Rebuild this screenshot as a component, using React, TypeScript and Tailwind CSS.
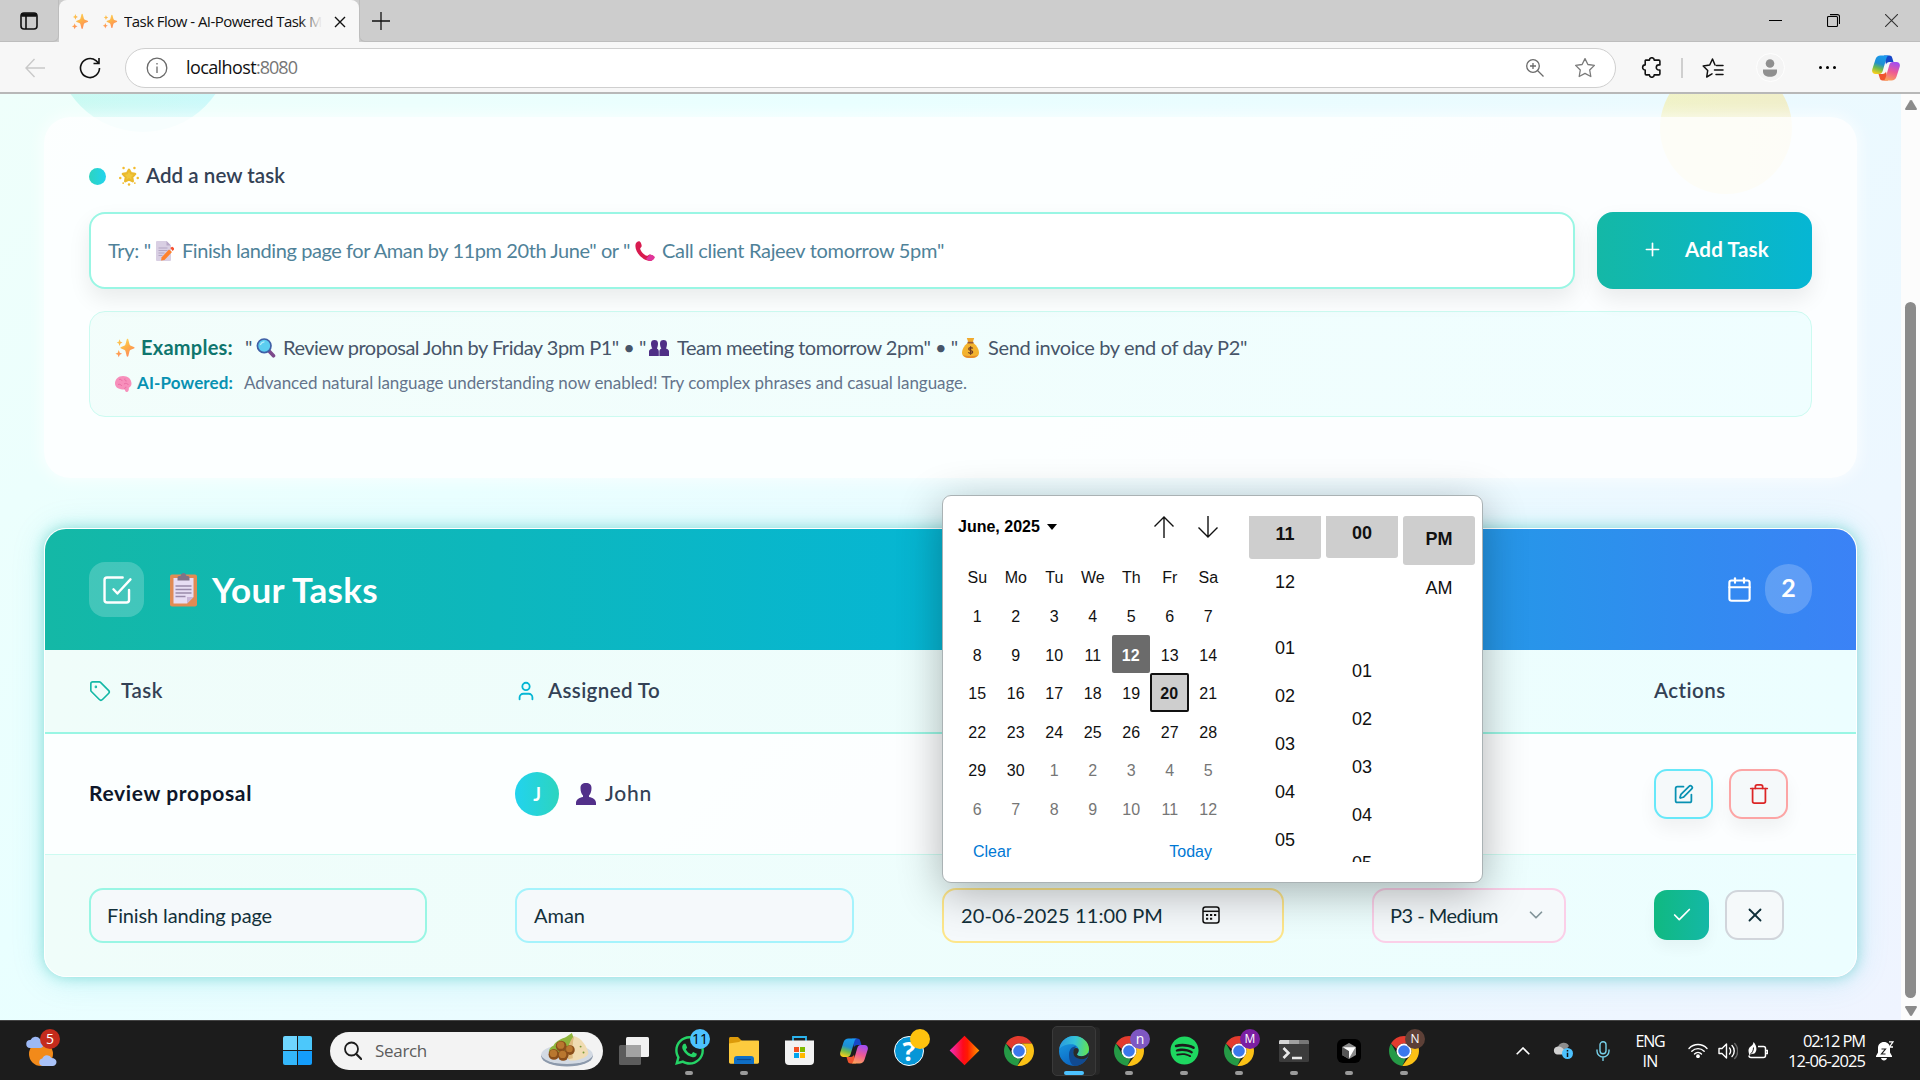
import React, { useLayoutEffect, useRef, type ReactNode } from "react";
import { Calendar, Check, ChevronDown, Plus, SquarePen, Tag, Trash, User, X } from "lucide-react";
import { FaSpotify, FaWhatsapp } from "react-icons/fa";

/* A single line of text whose letter spacing is adjusted so it fills the box width. */
function Fit({ className = "", children }: { className?: string; children: string }) {
  const box = useRef<HTMLSpanElement>(null);
  const line = useRef<HTMLSpanElement>(null);
  useLayoutEffect(() => {
    if (!box.current || !line.current) return;
    line.current.style.letterSpacing = "0px";
    const extra = box.current.getBoundingClientRect().width - line.current.getBoundingClientRect().width;
    line.current.style.letterSpacing = `${extra / children.length}px`;
  }, [children]);
  return (
    <span ref={box} data-line className={`block shrink-0 whitespace-pre ${className}`}>
      <span ref={line} className="inline-block">{children}</span>
    </span>
  );
}

/* ---------- pictograms ---------- */

function Sparkles({ className }: { className: string }) {
  return (
    <svg viewBox="0 0 24 24" className={`shrink-0 ${className}`}>
      <defs>
        <linearGradient id="spk" x1="0" y1="0" x2="0.6" y2="1">
          <stop offset="0" stopColor="#fde26b" />
          <stop offset="0.5" stopColor="#fdb347" />
          <stop offset="1" stopColor="#ff8a5c" />
        </linearGradient>
      </defs>
      <path fill="url(#spk)" d="M15 1c.7 0 .9.6 1 1.100l1.400 5.500c.2.9.8 1.500 1.600 1.800l3.700 1.400c1 .4 1 1.500 0 1.900L19 14.200c-.8.3-1.400.9-1.600 1.800L16 21.600c-.3 1.200-1.700 1.200-2 0L12.600 16c-.2-.9-.8-1.500-1.600-1.800l-3.700-1.500c-1-.4-1-1.500 0-1.900L11 9.400c.8-.3 1.400-.9 1.600-1.800L14 2.100c.1-.5.4-1.100 1-1.100z" />
      <path fill="url(#spk)" d="M5.500 1.500 6.600 4.400 9 5.500 6.600 6.600 5.500 9.500 4.400 6.600 2 5.500l2.400-1.100zM4.500 14.500l1.200 3.100 2.800 1.200-2.800 1.200-1.200 3.100-1.200-3.100L.5 18.800l2.800-1.200z" />
    </svg>
  );
}

function GlowStar() {
  return (
    <svg viewBox="0 0 24 24" className="h-[22px] w-[20px] shrink-0">
      <path fill="#eab92d" stroke="#eab92d" strokeWidth="3" strokeLinejoin="round" d="m12 4.500 2.300 4.300 5 .8-3.600 3.700.8 5L12 16l-4.500 2.300.8-5-3.600-3.700 5-.8z" />
      <path fill="#f0c83e" d="m12 6.500 1.600 3.500 3.600.600-2.500 2.600.4 3.400L12 14.500l-3.100 2.100.4-3.400-2.500-2.600 3.600-.600z" />
      <g fill="#f3bb2e"><circle cx="5.500" cy="2.500" r="1.500" /><circle cx="18.500" cy="2.500" r="1.500" /><circle cx="1.500" cy="14.500" r="1.500" /><circle cx="22.500" cy="14.500" r="1.500" /><circle cx="12" cy="22.300" r="1.500" /><circle cx="5" cy="20.500" r="1.100" /><circle cx="19" cy="20.500" r="1.100" /></g>
    </svg>
  );
}

function MemoEmoji() {
  return (
    <svg viewBox="0 0 18 20" className="h-[20px] w-[18px] shrink-0">
      <path fill="#d9cfe3" d="M1 0h9.500L15 4.500V19a1 1 0 0 1-1 1H1a1 1 0 0 1-1-1V1a1 1 0 0 1 1-1z" />
      <path fill="#b9a9c8" d="M10.500 0 15 4.500h-4.500z" />
      <path stroke="#b3a5c3" strokeWidth="1" d="M2.500 7h9M2.500 9.500h9M2.500 12h6M2.500 14.500h4" />
      <path fill="#ff822d" d="m13 8.500 3 2.600-7.500 8L5 19.500l.7-3.300z" />
      <path fill="#f8512f" d="m14.300 7.100 1-.9a1.300 1.300 0 0 1 1.800 0l.7.700a1.300 1.300 0 0 1 0 1.800L16.600 10z" />
    </svg>
  );
}

function PhoneEmoji() {
  return (
    <svg viewBox="0 0 20 20" className="h-[20px] w-[20px] shrink-0">
      <path fill="#d81b4f" d="M.8 2.600C1.400 1 3.600-.3 4.800.6c1 .8 1.900 3.200 1.900 4.400 0 1.200-1.600 1.800-1.500 2.800.3 2.400 4.100 6.500 6.600 7 1 .2 1.900-1.500 3.100-1.400 1.300.1 4 1.300 4.500 2.400.6 1.400-1.300 3.500-2.900 3.900C8.600 21.500-1.800 9.800.8 2.600z" />
      <path fill="#e0359c" d="M14.900 13.400c1.300.1 4 1.300 4.500 2.400.6 1.400-1.300 3.500-2.900 3.900-1.600.4-3.700-.3-5.500-1.700z" />
    </svg>
  );
}

function MagnifierEmoji() {
  return (
    <svg viewBox="0 0 20 20" className="h-[20px] w-[20px] shrink-0">
      <path stroke="#7d4a8b" strokeWidth="3.600" strokeLinecap="round" d="m13.500 13.500 4 4.300" />
      <circle cx="8.200" cy="7.800" r="6.800" fill="#5ccdf0" stroke="#3f5fa6" strokeWidth="1.700" />
      <path d="M4.500 6.500c.7-1.600 1.900-2.500 3.500-2.700" stroke="#b7eefb" strokeWidth="1.300" fill="none" strokeLinecap="round" />
    </svg>
  );
}

function PeopleEmoji() {
  return (
    <svg viewBox="0 0 20 16" className="h-[16px] w-[20px] shrink-0" fill="#4f2f86">
      <path d="M2 3.500C2 1 3.300 0 5.500 0S9 1 9 3.500c0 2-.5 3.700-1.100 5C9.100 9 9.800 10 9.800 11.500V16H0v-4.500C0 10 1.200 9 3.300 8.500 2.600 7.200 2 5.500 2 3.500z" />
      <path d="M11 3.500C11 1 12.300 0 14.500 0S18 1 18 3.500c0 2-.4 3.700-1 5 1.900.5 3 1.500 3 3V16h-9.600v-4.500c0-1.500.7-2.500 1.900-3-.8-1.300-1.300-3-1.300-5z" />
    </svg>
  );
}

function PersonEmoji() {
  return (
    <svg viewBox="0 0 20 22" className="h-[22px] w-[20px] shrink-0" fill="#52308a">
      <path d="M4.500 5C4.500 1.500 6.500 0 10 0s5.500 1.500 5.500 5c0 3.500-1 6-2.500 7.500v1.600c3.800.6 7 2.700 7 6v1.900H0v-1.900c0-3.300 3.200-5.400 7-6v-1.600C5.500 11 4.500 8.500 4.500 5z" />
    </svg>
  );
}

function BagEmoji() {
  return (
    <svg viewBox="0 0 17 20" className="h-[20px] w-[17px] shrink-0">
      <path fill="#f3b32e" d="M5.500 5h6c3.600 3 5.500 6.500 5.500 9.500C17 18 14.800 20 8.500 20S0 18 0 14.500C0 11.500 1.900 8 5.500 5z" />
      <path fill="#e58a2b" d="M1 17c2 1.500 13 1.500 15 0-1.200 2-3.400 3-7.500 3S2.200 19 1 17z" />
      <path fill="#f0a92c" d="M4.800 0h7.400L10.800 4H6.200z" />
      <path fill="#9a5a35" d="M5.500 3.800h6v1.700h-6z" />
      <path fill="none" stroke="#6b3b25" strokeWidth="1.200" d="M10.700 10.500c-.5-1.100-4-1.300-4 .5 0 1.900 4 1.100 4 3 0 1.800-3.700 1.700-4.300.3M8.600 8.300v8.400" />
    </svg>
  );
}

function BrainEmoji() {
  return (
    <svg viewBox="0 0 17 16" className="h-[16px] w-[17px] shrink-0">
      <path fill="#f78fbb" d="M8 0c5 0 8.500 3 8.500 7.500 0 2-1 3.500-2.700 4.300.3 2-.5 4-1.900 4.200-1.200.1-1.800-1-2-2.500C6 13.800 0 12.500 0 7.500 0 3.500 3.200 0 8 0z" />
      <path fill="none" stroke="#e86aa2" strokeWidth=".9" d="M4 3.500c1.500-.8 3 .2 3 1.600M3 8.500c1.600-.7 3.200 0 3.600 1.500M10 2.500c-.7 1.500.4 2.600 1.700 2.500M9 8c1.500-1.200 3.700-.7 4.300.9M9.700 13.200c-.2-1.200.6-2 1.600-2" />
    </svg>
  );
}

function ClipboardEmoji() {
  return (
    <svg viewBox="0 0 27 34" className="h-[34px] w-[27px] shrink-0">
      <rect x="0" y="1.500" width="27" height="32" rx="2" fill="#e08b54" />
      <path fill="#e7ddf3" d="M3.500 5h20v19l-6.500 6.500H3.500z" />
      <path fill="#c9b6d8" d="M23.500 24H17v6.500z" />
      <path fill="#7f7287" d="M7.500 7.500V5c0-1.500 1-2.200 3.200-2.200C11 1 12 0 13.500 0s2.500 1 2.800 2.800c2.200 0 3.200.7 3.200 2.200v2.500z" />
      <path stroke="#9a8bab" strokeWidth="1.300" d="M5.500 13h16M5.500 16.500h16M5.500 20h16M5.500 23.500h10" />
    </svg>
  );
}

/* ---------- app logos ---------- */

function Copilot({ className }: { className: string }) {
  return (
    <svg viewBox="0 0 28 26" className={`shrink-0 ${className}`}>
      <defs>
        <linearGradient id="cpA" x1="0.6" y1="0" x2="0.3" y2="1">
          <stop offset="0" stopColor="#1a9bf0" /><stop offset="0.45" stopColor="#1f8fd0" /><stop offset="0.7" stopColor="#6cba4e" /><stop offset="1" stopColor="#f8cf1c" />
        </linearGradient>
        <linearGradient id="cpB" x1="0.6" y1="0" x2="0.3" y2="1">
          <stop offset="0" stopColor="#a34df0" /><stop offset="0.5" stopColor="#ee5a94" /><stop offset="1" stopColor="#fba35a" />
        </linearGradient>
      </defs>
      <path fill="#1747c8" d="M12 .5h5.500c1.400 0 2.300.8 2.700 2.200L21.500 7h-4c-2 0-3 1-3.500 2.500z" />
      <path fill="#f0552f" d="M16 25.500h-5.500c-1.400 0-2.300-.8-2.700-2.200L6.500 19h4c2 0 3-1 3.500-2.500z" />
      <path fill="url(#cpA)" d="M8.500.5h9c-1.700 0-2.500 1-3 2.600L10.700 16c-.6 2-1.700 3-3.500 3H3.500C.8 19-.4 16.800.3 14.300L3.600 4C4.400 1.700 6 .5 8.500.5z" />
      <path fill="url(#cpB)" d="M19.500 25.500h-9c1.700 0 2.500-1 3-2.600L17.300 10c.6-2 1.700-3 3.500-3h3.700c2.700 0 3.900 2.200 3.200 4.700L24.400 22c-.8 2.300-2.400 3.500-4.900 3.500z" />
    </svg>
  );
}

function Chrome() {
  return (
    <svg viewBox="0 0 48 48" className="h-[30px] w-[30px]">
      <path fill="#e33b2e" d="M24 0c8.900 0 16.600 4.800 20.800 12H24c-5.500 0-10.200 3.700-11.600 8.800L3.200 12C7.400 4.800 15.100 0 24 0z" />
      <path fill="#259a46" d="M3.200 12 13.600 30c2.100 3.600 6 6 10.400 6 1 0 2-.1 3-.4L21.200 47.800C9.200 46.400 0 36.300 0 24c0-4.400 1.200-8.500 3.200-12z" />
      <path fill="#fbc116" d="M44.800 12C46.800 15.500 48 19.600 48 24c0 13.300-10.700 24-24 24-.9 0-1.900 0-2.800-.2L34.400 30c1-1.800 1.600-3.800 1.600-6 0-5-3-9.400-7.400-11.100L28 12z" />
      <circle cx="24" cy="24" r="12" fill="#fff" /><circle cx="24" cy="24" r="9.300" fill="#3b78ec" />
    </svg>
  );
}

function Edge() {
  return (
    <svg viewBox="0 0 30 30" className="h-[30px] w-[30px]">
      <defs>
        <linearGradient id="egT" x1="0" y1="0.5" x2="1" y2="0.6">
          <stop offset="0" stopColor="#2b9be0" /><stop offset="0.5" stopColor="#34c2d8" /><stop offset="1" stopColor="#63e34f" />
        </linearGradient>
        <linearGradient id="egB" x1="0" y1="0" x2="0.5" y2="1"><stop offset="0" stopColor="#1ba2e6" /><stop offset="1" stopColor="#0b63c0" /></linearGradient>
      </defs>
      <circle cx="15" cy="15" r="15" fill="url(#egB)" />
      <path fill="#114a91" d="M10 19c0-6 3-8.500 7-8.500L14 16c0 4 4 7.200 8.500 7.200 2 0 3.800-.4 5.300-1.200C25.500 27 20.800 30 15.500 30 12 29 10 24 10 19z" />
      <path fill="url(#egT)" d="M.3 13C1.300 5.500 7.500 0 15 0c8.500 0 15 6 15 13 0 4.500-3.500 7.300-7.700 7.300-2.500 0-4.300-.8-4.300-2 0-.8 1.700-1.500 1.700-4 0-3.300-3-6-7.200-6C7 8.300 2.500 10 .3 13z" />
      <path fill="#2a2a2a" d="M19.700 14.300c0 2.500-1.700 3.200-1.700 4 0 1.200 1.800 2 4.300 2 2.600 0 4.900-1 6.300-2.800 1.300-1.200 1.600.3.8 1.900-.5 1.200-1.200 2.200-2.200 2.800-4.500 2.200-12.700.8-13-5.400 0-2.700 1.100-4.500 2.500-4.800 1.500-.2 3 .7 3 2.300z" />
    </svg>
  );
}

function Weather() {
  return (
    <svg viewBox="0 0 32 34" className="h-[34px] w-[32px]">
      <circle cx="15" cy="20" r="12" fill="#f28a1a" />
      <path fill="#9db9f5" d="M4 14a4 4 0 0 1 .5-8A5.500 5.500 0 0 1 14 5c2.500 0 4 2 4 4.500S16 14 14 14z" />
      <path fill="#a9c2f8" d="M16.500 32a3.800 3.800 0 0 1-.2-7.500 5 5 0 0 1 9.200-.5c3 0 5 1.700 5 4s-1.500 4-4 4z" />
    </svg>
  );
}

function FoodPlate() {
  return (
    <svg viewBox="0 0 54 36" className="h-[35px] w-[54px]">
      <ellipse cx="27" cy="24" rx="26.500" ry="10.500" fill="#8c99ab" />
      <ellipse cx="27" cy="22" rx="26.500" ry="10" fill="#d3dae3" />
      <path fill="#8fb53c" d="M9 22c-2-4 1-8 4-9 3-6 9-7 13-9l6-4 3 8-5 14z" />
      <path fill="#f0dcb2" d="M34 3c8 2 14 11 15 18-3 6-15 8-20 7z" />
      <path fill="#dfbb80" d="M34 3c-5 6-8 15-6 24l5-1c-1-8 0-16 1-23z" />
      <g fill="#7d9a3a"><circle cx="41" cy="14" r="1" /><circle cx="44" cy="20" r="1" /></g>
      <g fill="#8a4e1a"><circle cx="21" cy="13.500" r="5.500" /><circle cx="13.500" cy="22" r="5.500" /><circle cx="23" cy="23" r="5.500" /><circle cx="30" cy="17.500" r="5" /></g>
      <g fill="#b9772f"><circle cx="20.500" cy="12.500" r="3.800" /><circle cx="13" cy="21" r="3.800" /><circle cx="22.500" cy="22" r="3.800" /><circle cx="29.500" cy="16.500" r="3.400" /></g>
    </svg>
  );
}

/* ---------- browser chrome ---------- */

function TabStrip() {
  return (
    <div className="flex h-[42px] shrink-0 items-start bg-[#cdcdcd]">
      <div className="flex h-[42px] w-[59px] items-center justify-center rounded-br-[6px] border-r border-b border-[#bdbdbd]">
        <svg viewBox="0 0 18 18" className="h-[18px] w-[18px]" fill="none" stroke="#111" strokeWidth="1.600">
          <rect x="1" y="1" width="16" height="16" rx="3" /><path d="M1.500 3h15" strokeWidth="3.500" /><path d="M6 4v13" />
        </svg>
      </div>
      <div className="flex h-[43px] w-[300px] items-center rounded-t-[8px] bg-[#f7f7f7] pl-[12px]">
        <Sparkles className="h-[17px] w-[18px]" />
        <Sparkles className="ml-[13px] h-[15px] w-[16px]" />
        <div className="relative ml-[6px] h-[22px] w-[198px] overflow-hidden">
          <Fit className="w-[198px] text-[15px] leading-[21px] text-[#111]">Task Flow - AI-Powered Task M</Fit>
          <div className="absolute top-0 right-0 h-full w-[22px] bg-gradient-to-r from-transparent to-[#f7f7f7]" />
        </div>
        <svg viewBox="0 0 12 12" className="ml-[12px] h-[12px] w-[12px]" stroke="#111" strokeWidth="1.400"><path d="m1 1 10 10M11 1 1 11" /></svg>
      </div>
      <div className="flex h-[42px] flex-1 items-center rounded-bl-[6px] border-b border-l border-[#bdbdbd] pl-[12px]">
        <svg viewBox="0 0 18 18" className="h-[18px] w-[18px]" stroke="#111" strokeWidth="1.300"><path d="M9 0v18M0 9h18" /></svg>
        <div className="ml-auto flex items-center pr-[22px] text-black">
          <svg viewBox="0 0 13 13" className="h-[13px] w-[13px]" stroke="#000"><path d="M0 6.500h13" /></svg>
          <svg viewBox="0 0 13 13" className="ml-[45px] h-[13px] w-[13px]" fill="none" stroke="#000" strokeWidth="1.100"><rect x=".5" y="2.500" width="10" height="10" rx="1" /><path d="M3 .6h7.500a2 2 0 0 1 2 2V10" /></svg>
          <svg viewBox="0 0 13 13" className="ml-[45px] h-[13px] w-[13px]" stroke="#333" strokeWidth="1.100"><path d="m0 0 13 13M13 0 0 13" /></svg>
        </div>
      </div>
    </div>
  );
}

const STAR = "m12 2.600 2.900 5.900 6.500.9-4.700 4.600 1.100 6.500-5.800-3.100-5.800 3.100 1.100-6.500L2.600 9.400l6.500-.9z";

function Toolbar() {
  return (
    <div className="flex h-[52px] shrink-0 items-center border-b-2 border-[#b8b8b8] bg-[#f7f7f7] pt-[1px]">
      <svg viewBox="0 0 20 20" className="ml-[25px] h-[20px] w-[20px]" fill="none" stroke="#c9c9c9" strokeWidth="1.400"><path d="M20 10H1M9.500 1 1 10l8.500 9" /></svg>
      <svg viewBox="0 0 22 22" className="ml-[34px] h-[22px] w-[22px]" fill="none" stroke="#111" strokeWidth="1.600"><path d="M20.500 11A9.500 9.500 0 1 1 17 3.700L19.500 6M20 1v5.500h-5.500" /></svg>
      <div className="ml-[24px] flex h-[40px] w-[1491px] items-center rounded-full border border-[#cfcfcf] bg-white">
        <svg viewBox="0 0 22 22" className="ml-[20px] h-[22px] w-[22px]" fill="none" stroke="#6a6a6a" strokeWidth="1.300"><circle cx="11" cy="11" r="9.800" /><path d="M11 9.500V16M11 6v1.600" /></svg>
        <Fit className="ml-[18px] w-[70px] text-[18px] text-[#111]">localhost</Fit>
        <Fit className="w-[41px] text-[18px] text-[#767676]">:8080</Fit>
        <div className="mr-[10px] ml-auto flex gap-[10px]">
          <span className="flex w-[40px] items-center justify-center">
            <svg viewBox="0 0 18 18" className="h-[18px] w-[18px]" fill="none" stroke="#6a6a6a" strokeWidth="1.300"><circle cx="7" cy="7" r="6.300" /><path d="m11.500 11.500 6 6M7 4v6M4 7h6" /></svg>
          </span>
          <span className="flex w-[40px] items-center justify-center">
            <svg viewBox="0 0 24 24" className="h-[24px] w-[24px]" fill="none" stroke="#7a7a7a" strokeWidth="1.300" strokeLinejoin="round"><path d={STAR} /></svg>
          </span>
        </div>
      </div>
      <span className="ml-[11px] flex w-[48px] justify-center">
        <svg viewBox="0 0 20 20" className="h-[21px] w-[21px]" fill="none" stroke="#111" strokeWidth="1.500" strokeLinejoin="round">
          <path d="M4.500 3H8a2.300 2.300 0 0 1 4.600 0H17a1 1 0 0 1 1 1v3.500h-1a2.400 2.400 0 0 0 0 4.900h1V16a1 1 0 0 1-1 1h-4.400a2.300 2.300 0 0 1-4.600 0H5a1 1 0 0 1-1-1v-3.600a2.400 2.400 0 0 1 0-4.900V3.500z" />
        </svg>
      </span>
      <span className="ml-[6px] h-[20px] w-[2px] bg-[#cfcfcf]" />
      <span className="ml-[6px] flex w-[48px] justify-center">
        <svg viewBox="0 0 22 20" className="h-[20px] w-[22px]" fill="none" stroke="#111" strokeWidth="1.500" strokeLinejoin="round" strokeLinecap="round"><path d="M13 7 10.500 1 7.700 7l-6.500.9 4.500 4.600-1 6.500L10 15.800M14.500 7.500H21M12.500 12H21M14 16.500h7" /></svg>
      </span>
      <span className="ml-[9px] flex w-[48px] justify-center">
        <span className="flex h-[29px] w-[29px] items-center justify-center rounded-full border border-white bg-[#f4f4f4]">
          <svg viewBox="0 0 16 18" className="h-[18px] w-[16px]" fill="#8f8f8f"><circle cx="8" cy="4.500" r="4.300" /><path d="M1 10.500h14v2.200c0 3-3 5-7 5s-7-2-7-5z" /></svg>
        </span>
      </span>
      <span className="ml-[9px] flex w-[48px] justify-center gap-[4px]">
        <i className="h-[3px] w-[3px] rounded-full bg-black" /><i className="h-[3px] w-[3px] rounded-full bg-black" /><i className="h-[3px] w-[3px] rounded-full bg-black" />
      </span>
      <span className="ml-[11px] flex w-[48px] justify-center"><Copilot className="h-[26px] w-[28px]" /></span>
    </div>
  );
}

/* ---------- page ---------- */

function AddTaskCard() {
  return (
    <section className="relative h-[361px] w-[1813px] rounded-[26px] bg-white/85 px-[45px] pt-[45px] shadow-[0_0_14px_4px_rgba(255,255,255,0.6)]">
      <div className="flex h-[28px] items-center">
        <span className="h-[17px] w-[17px] rounded-full bg-gradient-to-r from-[#2dd4bf] to-[#22d3ee]" />
        <span className="ml-[13px] flex"><GlowStar /></span>
        <Fit className="ml-[7px] w-[139px] text-[20.500px] font-semibold text-[#334155]">Add a new task</Fit>
      </div>
      <div className="mt-[22px] flex gap-[22px]">
        <div className="flex h-[77px] w-[1486px] items-center rounded-[16px] border-2 border-[#99f6e4] bg-white pl-[17px] text-[20px] text-[#4f8299] shadow-[0_10px_22px_rgba(0,0,0,0.08)]">
          <Fit className="w-[43px]">{'Try: "'}</Fit>
          <span className="ml-[5px] flex"><MemoEmoji /></span>
          <Fit className="ml-[8px] w-[448px]">{'Finish landing page for Aman by 11pm 20th June" or "'}</Fit>
          <span className="ml-[5px] flex"><PhoneEmoji /></span>
          <Fit className="ml-[7px] w-[282px]">{'Call client Rajeev tomorrow 5pm"'}</Fit>
        </div>
        <div className="flex h-[77px] w-[215px] items-center rounded-[16px] bg-[linear-gradient(to_right,#14b8a6,#06b6d4)] pl-[45px] text-white shadow-[0_10px_22px_rgba(0,0,0,0.08)]">
          <Plus size={21} strokeWidth={1.900} className="-mt-[2px]" />
          <Fit className="ml-[22px] w-[84px] text-[20.500px] font-bold">Add Task</Fit>
        </div>
      </div>
      <div className="mt-[22px] h-[106px] rounded-[16px] border border-[#ccfbf1] bg-gradient-to-r from-[#f0fdfa]/80 to-[#ecfeff]/80 px-[25px] pt-[21px]">
        <div className="flex h-[30px] items-center text-[20px] text-[#475569]">
          <Sparkles className="h-[20px] w-[20px]" />
          <Fit className="ml-[6px] w-[92px] font-bold text-[#0f766e]">Examples:</Fit>
          <Fit className="ml-[12px] w-[8px]">{'"'}</Fit>
          <span className="ml-[3px] flex"><MagnifierEmoji /></span>
          <Fit className="ml-[7px] w-[363px]">{'Review proposal John by Friday 3pm P1" • "'}</Fit>
          <span className="ml-[3px] flex"><PeopleEmoji /></span>
          <Fit className="ml-[8px] w-[281px]">{'Team meeting tomorrow 2pm" • "'}</Fit>
          <span className="ml-[4px] flex"><BagEmoji /></span>
          <Fit className="ml-[9px] w-[259px]">{'Send invoice by end of day P2"'}</Fit>
        </div>
        <div className="mt-[7px] flex h-[28px] items-center text-[17px] text-[#64748b]">
          <BrainEmoji />
          <Fit className="ml-[5px] w-[96px] font-bold text-[#0891b2]">AI-Powered:</Fit>
          <Fit className="ml-[11px] w-[723px]">Advanced natural language understanding now enabled! Try complex phrases and casual language.</Fit>
        </div>
      </div>
    </section>
  );
}

const COLS = "grid grid-cols-[426px_427px_430px_282px_1fr] items-center pl-[44px]";

function TasksCard() {
  return (
    <section className="relative mt-[50px] h-[449px] w-[1813px] overflow-hidden rounded-[22px] border border-white bg-white/85">
      <header className="flex h-[121px] items-center bg-[linear-gradient(to_right,#14b8a6,#06b6d4,#3b82f6)] pr-[44px] pl-[44px] text-white">
        <span className="flex h-[55px] w-[55px] items-center justify-center rounded-[16px] bg-white/20">
          <svg viewBox="0 0 24 24" className="h-[34px] w-[34px]" fill="none" stroke="currentColor" strokeWidth="1.700" strokeLinecap="round" strokeLinejoin="round">
            <path d="m9.500 11.500 2.800 3L21.500 4.500M20.500 12v7a1.800 1.800 0 0 1-1.800 1.800H5a1.800 1.800 0 0 1-1.800-1.800V5A1.800 1.800 0 0 1 5 3.200h11" />
          </svg>
        </span>
        <span className="ml-[26px] flex"><ClipboardEmoji /></span>
        <Fit className="ml-[15px] w-[166px] text-[35px] leading-[44px] font-bold">Your Tasks</Fit>
        <Calendar size={27} strokeWidth={1.900} className="-mt-[1px] mr-[12px] ml-auto" />
        <span className="-mt-[2px] flex h-[50px] w-[47px] items-center justify-center rounded-full bg-white/20 pb-[1px] text-[25px] font-bold">2</span>
      </header>

      <div className={`${COLS} h-[84px] border-b-2 border-[#99f6e4] bg-gradient-to-r from-[#f0fdfa] to-[#ecfeff] text-[20.500px] font-semibold text-[#334155]`}>
        <span className="flex items-center">
          <Tag size={22} strokeWidth={1.800} className="text-[#14b8a6]" />
          <Fit className="ml-[10px] w-[42px]">Task</Fit>
        </span>
        <span className="flex items-center">
          <User size={22} strokeWidth={2} className="text-[#06b6d4]" />
          <Fit className="ml-[11px] w-[112px]">Assigned To</Fit>
        </span>
        <span /><span />
        <Fit className="w-[72px]">Actions</Fit>
      </div>

      <div className={`${COLS} h-[121px] border-b border-[#ccfbf1]`}>
        <Fit className="w-[163px] text-[21px] font-bold text-[#0f172a]">Review proposal</Fit>
        <span className="flex items-center">
          <span className="flex h-[44px] w-[44px] items-center justify-center rounded-full bg-gradient-to-r from-[#22d3ee] to-[#2dd4bf] text-[18px] font-bold text-white">J</span>
          <span className="ml-[17px] flex"><PersonEmoji /></span>
          <Fit className="ml-[9px] w-[47px] text-[21px] font-medium text-[#334155]">John</Fit>
        </span>
        <Calendar size={20} className="-ml-[1px] text-[#eab308]" />
        <span />
        <span className="flex gap-[16px]">
          <span className="flex h-[50px] w-[59px] items-center justify-center rounded-[13px] border-2 border-[#67e8f9] bg-[#f5f9fa] text-[#0891b2] shadow-[0_10px_18px_rgba(0,0,0,0.05)]"><SquarePen size={21} strokeWidth={2} /></span>
          <span className="flex h-[50px] w-[59px] items-center justify-center rounded-[13px] border-2 border-[#fca5a5] bg-[#f5f9fa] text-[#dc2626] shadow-[0_10px_18px_rgba(0,0,0,0.05)]"><Trash size={22} strokeWidth={1.900} /></span>
        </span>
      </div>

      <div className={`${COLS} h-[121px] bg-gradient-to-r from-[#f0fdfa] to-[#ecfeff] text-[20px] text-[#12303a]`}>
        <span className="flex h-[55px] w-[338px] items-center rounded-[14px] border-2 border-[#99f6e4] bg-[#f5f9fb] pl-[16px]"><Fit className="w-[165px]">Finish landing page</Fit></span>
        <span className="flex h-[55px] w-[339px] items-center rounded-[14px] border-2 border-[#a5f3fc] bg-[#f5f9fb] pl-[17px]"><Fit className="w-[51px]">Aman</Fit></span>
        <span className="flex h-[55px] w-[342px] items-center rounded-[14px] border-2 border-[#fde68a] bg-[#f5f9fb] pl-[17px]">
          <Fit className="w-[202px]">20-06-2025 11:00 PM</Fit>
          <svg viewBox="0 0 18 18" className="-mt-[2px] ml-[39px] h-[18px] w-[18px]" fill="none" stroke="#111" strokeWidth="1.500"><rect x="1" y="1" width="16" height="16" rx="2.500" /><path d="M1 5.300h16" strokeWidth="1.500" /><path d="M4 9h2.200M8 9h2.200M12 9h2.200M4 12.700h2.200M8 12.700h2.200" strokeWidth="2" /></svg>
        </span>
        <span className="flex h-[55px] w-[194px] items-center rounded-[14px] border-2 border-[#fbcfe8] bg-[#f5f9fb] pl-[16px]">
          <Fit className="w-[108px]">P3 - Medium</Fit>
          <ChevronDown size={22} strokeWidth={1.900} className="-mt-[2px] ml-[27px] text-[#829499]" />
        </span>
        <span className="-mt-[1px] flex gap-[16px]">
          <span className="flex h-[50px] w-[55px] items-center justify-center rounded-[13px] bg-[linear-gradient(to_right,#10b981,#14b8a6)] text-white shadow-[0_8px_14px_rgba(0,0,0,0.04)]"><Check size={22} strokeWidth={1.900} /></span>
          <span className="flex h-[50px] w-[59px] items-center justify-center rounded-[13px] border-2 border-[#d1d5db] bg-[#f5f9fa] text-[#0f2f3a]"><X size={22} strokeWidth={2} /></span>
        </span>
      </div>
    </section>
  );
}

const DAYS = "1 2 3 4 5 6 7 8 9 10 11 12 13 14 15 16 17 18 19 20 21 22 23 24 25 26 27 28 29 30 1 2 3 4 5 6 7 8 9 10 11 12".split(" ");

function DateTimePopup() {
  return (
    <div className="absolute top-[401px] left-[942px] flex h-[388px] w-[541px] overflow-visible rounded-[9px] border border-[#aab2b4] bg-white font-['Liberation_Sans',sans-serif] text-[16px] text-[#111] shadow-[0_10px_44px_rgba(0,0,0,0.3)]">
      <div className="w-[286px] pl-[15px]">
        <div className="mt-[16px] flex h-[30px] items-center font-bold">
          <span className="w-[85px] whitespace-nowrap text-black">June, 2025</span>
          <span className="ml-[4px] h-0 w-0 border-x-[5px] border-t-[6px] border-x-transparent border-t-black" />
          <svg viewBox="0 0 20 22" className="ml-[97px] h-[22px] w-[20px]" fill="none" stroke="#111" strokeWidth="1.400"><path d="M10 22V1M.5 10.500 10 1l9.500 9.500" /></svg>
          <svg viewBox="0 0 20 22" className="ml-[24px] h-[22px] w-[20px] shrink-0" fill="none" stroke="#111" strokeWidth="1.400"><path d="M10 0v21M.5 11.500 10 21l9.500-9.500" /></svg>
        </div>
        <div className="mt-[15px] grid w-[269.500px] grid-cols-7 text-center">
          {["Su", "Mo", "Tu", "We", "Th", "Fr", "Sa"].map((d) => <span key={d} className="h-[39px] leading-[41px]">{d}</span>)}
          {DAYS.map((d, i) => (
            <span
              key={i}
              className={
                i === 11 ? "mr-[.5px] -ml-[.5px] h-[38.600px] rounded-[2px] bg-[#6b6b6b] leading-[41px] font-bold text-white"
                : i === 19 ? "mr-[.5px] -ml-[.5px] h-[38.600px] rounded-[2px] border-2 border-[#111] bg-[#cecece] leading-[37px] font-bold"
                : i > 29 ? "h-[38.600px] leading-[41px] text-[#767676]"
                : "h-[38.600px] leading-[41px]"
              }
            >
              {d}
            </span>
          ))}
        </div>
        <div className="mt-[5px] flex w-[254px] justify-between pl-[15px] leading-[37px] text-[#0078d4]">
          <span>Clear</span><span>Today</span>
        </div>
      </div>
      <div className="mt-[20px] ml-[20px] flex h-[346px] gap-[5px] overflow-hidden text-center text-[18px]">
        <div className="w-[72px]">
          <div className="h-[43px] rounded-b-[3px] bg-[#cecece] leading-[37px] font-bold">11</div>
          <div className="mt-[5px] h-[36px] leading-[37px]">12</div>
          <div className="mt-[24px]">{["01", "02", "03", "04", "05"].map((n) => <div key={n} className="h-[48px] leading-[49px]">{n}</div>)}</div>
        </div>
        <div className="w-[72px]">
          <div className="h-[42px] rounded-b-[3px] bg-[#cecece] leading-[35px] font-bold">00</div>
          <div className="mt-[89px]">{["01", "02", "03", "04", "05"].map((n) => <div key={n} className="h-[48px] leading-[49px]">{n}</div>)}</div>
        </div>
        <div className="w-[72px]">
          <div className="h-[49px] rounded-[3px] bg-[#cecece] leading-[47px] font-bold">PM</div>
          <div className="h-[48px] leading-[47px]">AM</div>
        </div>
      </div>
    </div>
  );
}

function Scrollbar() {
  return (
    <div className="flex w-[19px] shrink-0 flex-col items-center bg-[#fcfcfc]">
      <svg viewBox="0 0 12 10" className="mt-[6px] h-[10px] w-[12px]" fill="#8b8b8b"><path d="M6 0c.5 0 .8.200 1 .5l4.800 8c.3.700-.1 1.500-.9 1.500H1.100c-.8 0-1.200-.8-.9-1.500L5 .5c.2-.3.500-.5 1-.5z" /></svg>
      <div className="mt-[192px] h-[696px] w-[11px] rounded-full bg-[#8b8b8b]" />
      <svg viewBox="0 0 12 10" className="mt-[8px] h-[10px] w-[12px]" fill="#8b8b8b"><path d="M6 10c.5 0 .8-.2 1-.5l4.800-8c.3-.7-.1-1.500-.9-1.500H1.100C.3 0-.1.800.2 1.500l4.800 8c.2.300.5.500 1 .5z" /></svg>
    </div>
  );
}

/* ---------- taskbar ---------- */

function TaskIcon({ children, running = false }: { children: ReactNode; running?: boolean }) {
  return (
    <div className="relative flex h-[50px] w-[44px] shrink-0 items-center justify-center">
      {children}
      {running && <span className="absolute bottom-[1px] left-[18px] h-[4px] w-[8px] rounded-full bg-[#9a9a9a]" />}
    </div>
  );
}

function Badge({ className, children }: { className: string; children?: ReactNode }) {
  return <span className={`absolute top-[3px] right-[1px] flex h-[20px] w-[20px] items-center justify-center rounded-full leading-none ${className}`}>{children}</span>;
}

function Taskbar() {
  return (
    <footer className="flex h-[60px] shrink-0 items-center border-t border-[#444] bg-[#1c1c1c] text-white">
      <div className="relative ml-[20px] flex w-[44px] justify-center"><Weather /><span className="absolute -top-[5px] right-[4px] flex h-[20px] w-[20px] items-center justify-center rounded-full bg-[#c42b1c] text-[14px]">5</span></div>
      <div className="ml-[211px] flex w-[44px] justify-center">
        <div className="grid h-[29px] w-[29px] grid-cols-2 gap-[1px]">
          <i className="rounded-tl-[2px] bg-[#6fd6ff]" /><i className="rounded-tr-[2px] bg-[#4cc8fb]" /><i className="rounded-bl-[2px] bg-[#34b7fb]" /><i className="rounded-br-[2px] bg-[#149dfb]" />
        </div>
      </div>
      <div className="ml-[11px] flex h-[38px] w-[273px] items-center rounded-full bg-[#f3f3f3]">
        <svg viewBox="0 0 18 18" className="ml-[14px] h-[19px] w-[18px]" fill="none" stroke="#1c1c1c" strokeWidth="1.800"><circle cx="7.500" cy="7.500" r="6.500" /><path d="m12.200 12.500 5 5" strokeWidth="2.200" strokeLinecap="round" /></svg>
        <Fit className="ml-[13px] w-[52px] text-[17px] text-[#5c5c5c]">Search</Fit>
        <span className="ml-auto pr-[9px]"><FoodPlate /></span>
      </div>
      <div className="ml-[9px] flex items-center gap-[11px]">
        <TaskIcon><svg viewBox="0 0 30 28" className="h-[28px] w-[30px]"><rect x="0" y="8" width="22" height="20" rx="1.500" fill="#5c5c5c" /><rect x="7" y="0" width="23" height="20" rx="1.500" fill="#f1f1f1" /><path fill="#a3a3a3" d="M7 8h15v12H7z" /></svg></TaskIcon>
        <TaskIcon running><FaWhatsapp className="h-[33px] w-[33px] text-[#25d366]" /><Badge className="bg-[#4cc2ff] text-[14px] text-black">11</Badge></TaskIcon>
        <TaskIcon running><svg viewBox="0 0 30 27" className="h-[27px] w-[30px]"><path fill="#dc9a0a" d="M0 1.500C0 .7.700 0 1.500 0H9l3.500 3.500V8H0z" /><path fill="#fdcb3e" d="M0 6.500 10 5l2.500-1.500H29c.6 0 1 .4 1 1V25c0 1-.7 1.700-1.600 1.700H1.600C.7 26.700 0 26 0 25z" /><path fill="#0f6fc6" d="M5 22a3 3 0 0 1 3-3h14a3 3 0 0 1 3 3v5H5z" /><path stroke="#0a4a92" strokeWidth="1.200" d="M8 22.500h14" /></svg></TaskIcon>
        <TaskIcon><svg viewBox="0 0 29 29" className="h-[29px] w-[29px]"><path fill="none" stroke="#2bb4ee" strokeWidth="1.800" d="M8 5.500V1h13v4.500" /><path fill="#f2f2f2" d="M0 4.500h29V25a4 4 0 0 1-4 4H4a4 4 0 0 1-4-4z" /><path fill="#f25022" d="M9 11h5v5H9z" /><path fill="#7fba00" d="M15 11h5v5h-5z" /><path fill="#00a4ef" d="M9 17h5v5H9z" /><path fill="#ffb900" d="M15 17h5v5h-5z" /></svg></TaskIcon>
        <TaskIcon><Copilot className="h-[26px] w-[28px]" /></TaskIcon>
        <TaskIcon><span className="flex h-[30px] w-[30px] items-center justify-center rounded-full border-[1.500px] border-white bg-[#0696d7] text-[27px] leading-none font-bold">?</span><Badge className="bg-[#ffc20e]" /></TaskIcon>
        <TaskIcon><span className="h-[21px] w-[21px] rotate-45 bg-[linear-gradient(45deg,#f02ec0_0%,#ff0a1a_45%,#ff1a00_60%,#ff9a00_100%)]" /></TaskIcon>
        <TaskIcon><Chrome /></TaskIcon>
        <div className="relative flex h-[50px] w-[44px] items-center justify-center rounded-[5px] border border-[#3a3a3a] bg-[#2b2b2b] shadow-[5px_0_0_-1px_#262626]"><Edge /><span className="absolute bottom-0 left-[11px] h-[4px] w-[20px] rounded-full bg-[#4cc2ff]" /></div>
        <TaskIcon running><Chrome /><Badge className="bg-[#7e57c2] text-[14px]">n</Badge></TaskIcon>
        <TaskIcon running><FaSpotify className="h-[29px] w-[29px] text-[#1ed760]" /></TaskIcon>
        <TaskIcon running><Chrome /><Badge className="bg-[#7b1fa2] text-[12px]">M</Badge></TaskIcon>
        <TaskIcon running><svg viewBox="0 0 30 22" className="h-[22px] w-[30px]"><rect width="30" height="22" rx="1.500" fill="#3c3c3c" /><path fill="#d5d5d5" d="M0 4V1.500C0 .7.700 0 1.500 0H10v4z" /><path fill="#a0a0a0" d="M10 0h10v4H10z" /><path fill="#777" d="M20 0h8.500c.8 0 1.500.7 1.500 1.500V4H20z" /><path fill="none" stroke="#e8e8e8" strokeWidth="2.600" d="m4.500 8 5 5-5 5M13 18h10" /></svg></TaskIcon>
        <TaskIcon running><span className="flex h-[24px] w-[24px] items-center justify-center rounded-[6px] bg-black"><svg viewBox="0 0 14 16" className="h-[16px] w-[14px]"><path fill="#8a8a8a" d="m7 0 7 4v8l-7 4-7-4V4z" /><path fill="#555" d="M0 4v8l7 4V8z" /><path fill="#fff" d="M1 4.300h12.500L7 15.500V8z" /></svg></span></TaskIcon>
        <TaskIcon running><Chrome /><Badge className="bg-[#5d4037] text-[12px]">N</Badge></TaskIcon>
      </div>
      <div className="ml-[77px] flex items-center">
        <span className="flex w-[40px] justify-center"><svg viewBox="0 0 14 8" className="h-[8px] w-[14px]" fill="none" stroke="#fff" strokeWidth="1.600"><path d="m.7 7.300 6.300-6.300 6.300 6.300" /></svg></span>
        <span className="flex w-[40px] justify-center"><svg viewBox="0 0 20 17" className="h-[17px] w-[20px]"><path fill="#8d8d8d" d="M5 5a6 6 0 0 1 11-1l-6 7z" /><path fill="#d0d0d0" d="M4 12.500A4 4 0 0 1 4 4.700c3-1 5.500 1 7 3l3 4.800z" /><circle cx="14.500" cy="11.500" r="5.500" fill="#4cc2ff" /><path stroke="#111" strokeWidth="1.500" d="M14.500 10.800V15M14.500 8v1.500" /></svg></span>
        <span className="flex w-[40px] justify-center"><svg viewBox="0 0 14 20" className="h-[20px] w-[14px]" fill="none" stroke="#76cfe8" strokeWidth="1.400" strokeLinecap="round"><rect x="4" y=".8" width="6" height="12" rx="3" /><path d="M1 9v1a6 6 0 0 0 12 0V9M7 16v3.500" /></svg></span>
        <div className="ml-[7px] flex w-[40px] flex-col items-center text-[16px] leading-[20px]"><Fit className="w-[29px]">ENG</Fit><Fit className="w-[15px]">IN</Fit></div>
        <div className="ml-[13px] flex items-center">
          <span className="flex w-[30px] justify-center"><svg viewBox="0 0 20 15" className="h-[15px] w-[20px]" fill="none" stroke="#fff" strokeWidth="1.400" strokeLinecap="round"><path d="M1 5.500c5-5.300 13-5.300 18 0M3.800 8.300c3.500-3.600 8.900-3.600 12.400 0M6.500 11c2-2 5-2 7 0" /><circle cx="10" cy="13.200" r="1.200" fill="#fff" /></svg></span>
          <span className="flex w-[30px] justify-center"><svg viewBox="0 0 20 18" className="h-[18px] w-[20px]" fill="none" stroke="#fff" strokeWidth="1.400" strokeLinejoin="round" strokeLinecap="round"><path d="M1 6.500h3L8.500 2v14L4 11.500H1zM11.500 6c1.500 1.500 1.500 4.500 0 6M14 3.500c3 3 3 8 0 11" /><path stroke="#666" d="M16.700 1.500c4 4 4 11 0 15" /></svg></span>
          <span className="flex w-[30px] justify-center"><svg viewBox="0 0 20 17" className="h-[17px] w-[20px]" fill="none" stroke="#fff" strokeWidth="1.500"><path d="M10 4.500h5.500a2 2 0 0 1 2 2v7a2 2 0 0 1-2 2H3a2 2 0 0 1-2-2M18 8.500h1.500v3H18" /><path fill="#fff" stroke="none" d="M5.500 0c3 3 4 8 1.500 11-1.500 1.300-3 .5-4.300 1.500l-1.200 1C1 11.500-.5 8 1.500 5.500 3 4 5 3.500 5.500 0z" /><path stroke="#1c1c1c" strokeWidth="1" d="M5.500 5.500C5.500 9 4 11 2 12.500" /></svg></span>
        </div>
        <div className="ml-[7px] flex w-[85px] flex-col items-end text-[16.500px] leading-[20px]"><Fit className="w-[62px]">02:12 PM</Fit><Fit className="w-[77px]">12-06-2025</Fit></div>
        <svg viewBox="0 0 18 20" className="ml-[11px] h-[20px] w-[18px]"><path fill="#fff" d="M8 1c3.500 0 6 2.500 6 6v4.500l2 3.500v1H0v-1l2-3.500V7c0-3.500 2.500-6 6-6zM5 17h6c-.3 1.600-1.500 2.500-3 2.500S5.300 18.600 5 17z" /><path fill="none" stroke="#1c1c1c" strokeWidth="1.200" d="M5.500 8h4l-4 5h4" /><path fill="none" stroke="#fff" strokeWidth="1.300" d="M13 .8h4L13.500 6H17" /></svg>
      </div>
    </footer>
  );
}

export default function App() {
  return (
    <div className="flex h-[1080px] w-[1920px] flex-col overflow-hidden font-['Open_Sans',sans-serif]">
      <TabStrip />
      <Toolbar />
      <div className="flex h-[926px] shrink-0">
        <main className="relative w-[1901px] overflow-hidden bg-[linear-gradient(135deg,#effffb_0%,#e9ffff_30%,#ebfaff_62%,#eff4ff_100%)] pt-[23px] pl-[44px] font-['Lato',sans-serif] [&_[data-line]]:pb-[2px]">
          <div className="absolute -top-[138px] left-[55px] h-[176px] w-[176px] rounded-full bg-gradient-to-r from-[#5eead4] to-[#67e8f9] opacity-25" />
          <div className="absolute -top-[32px] left-[1660px] h-[132px] w-[132px] rounded-full bg-gradient-to-r from-[#fde047] to-[#fcd34d] opacity-30" />
          <div className="absolute top-[434px] left-[44px] h-[449px] w-[1813px] rounded-[22px] shadow-[0_0_14px_rgba(20,184,166,0.4),0_2px_34px_rgba(6,182,212,0.16)]" />
          <AddTaskCard />
          <TasksCard />
          <DateTimePopup />
        </main>
        <Scrollbar />
      </div>
      <Taskbar />
    </div>
  );
}
